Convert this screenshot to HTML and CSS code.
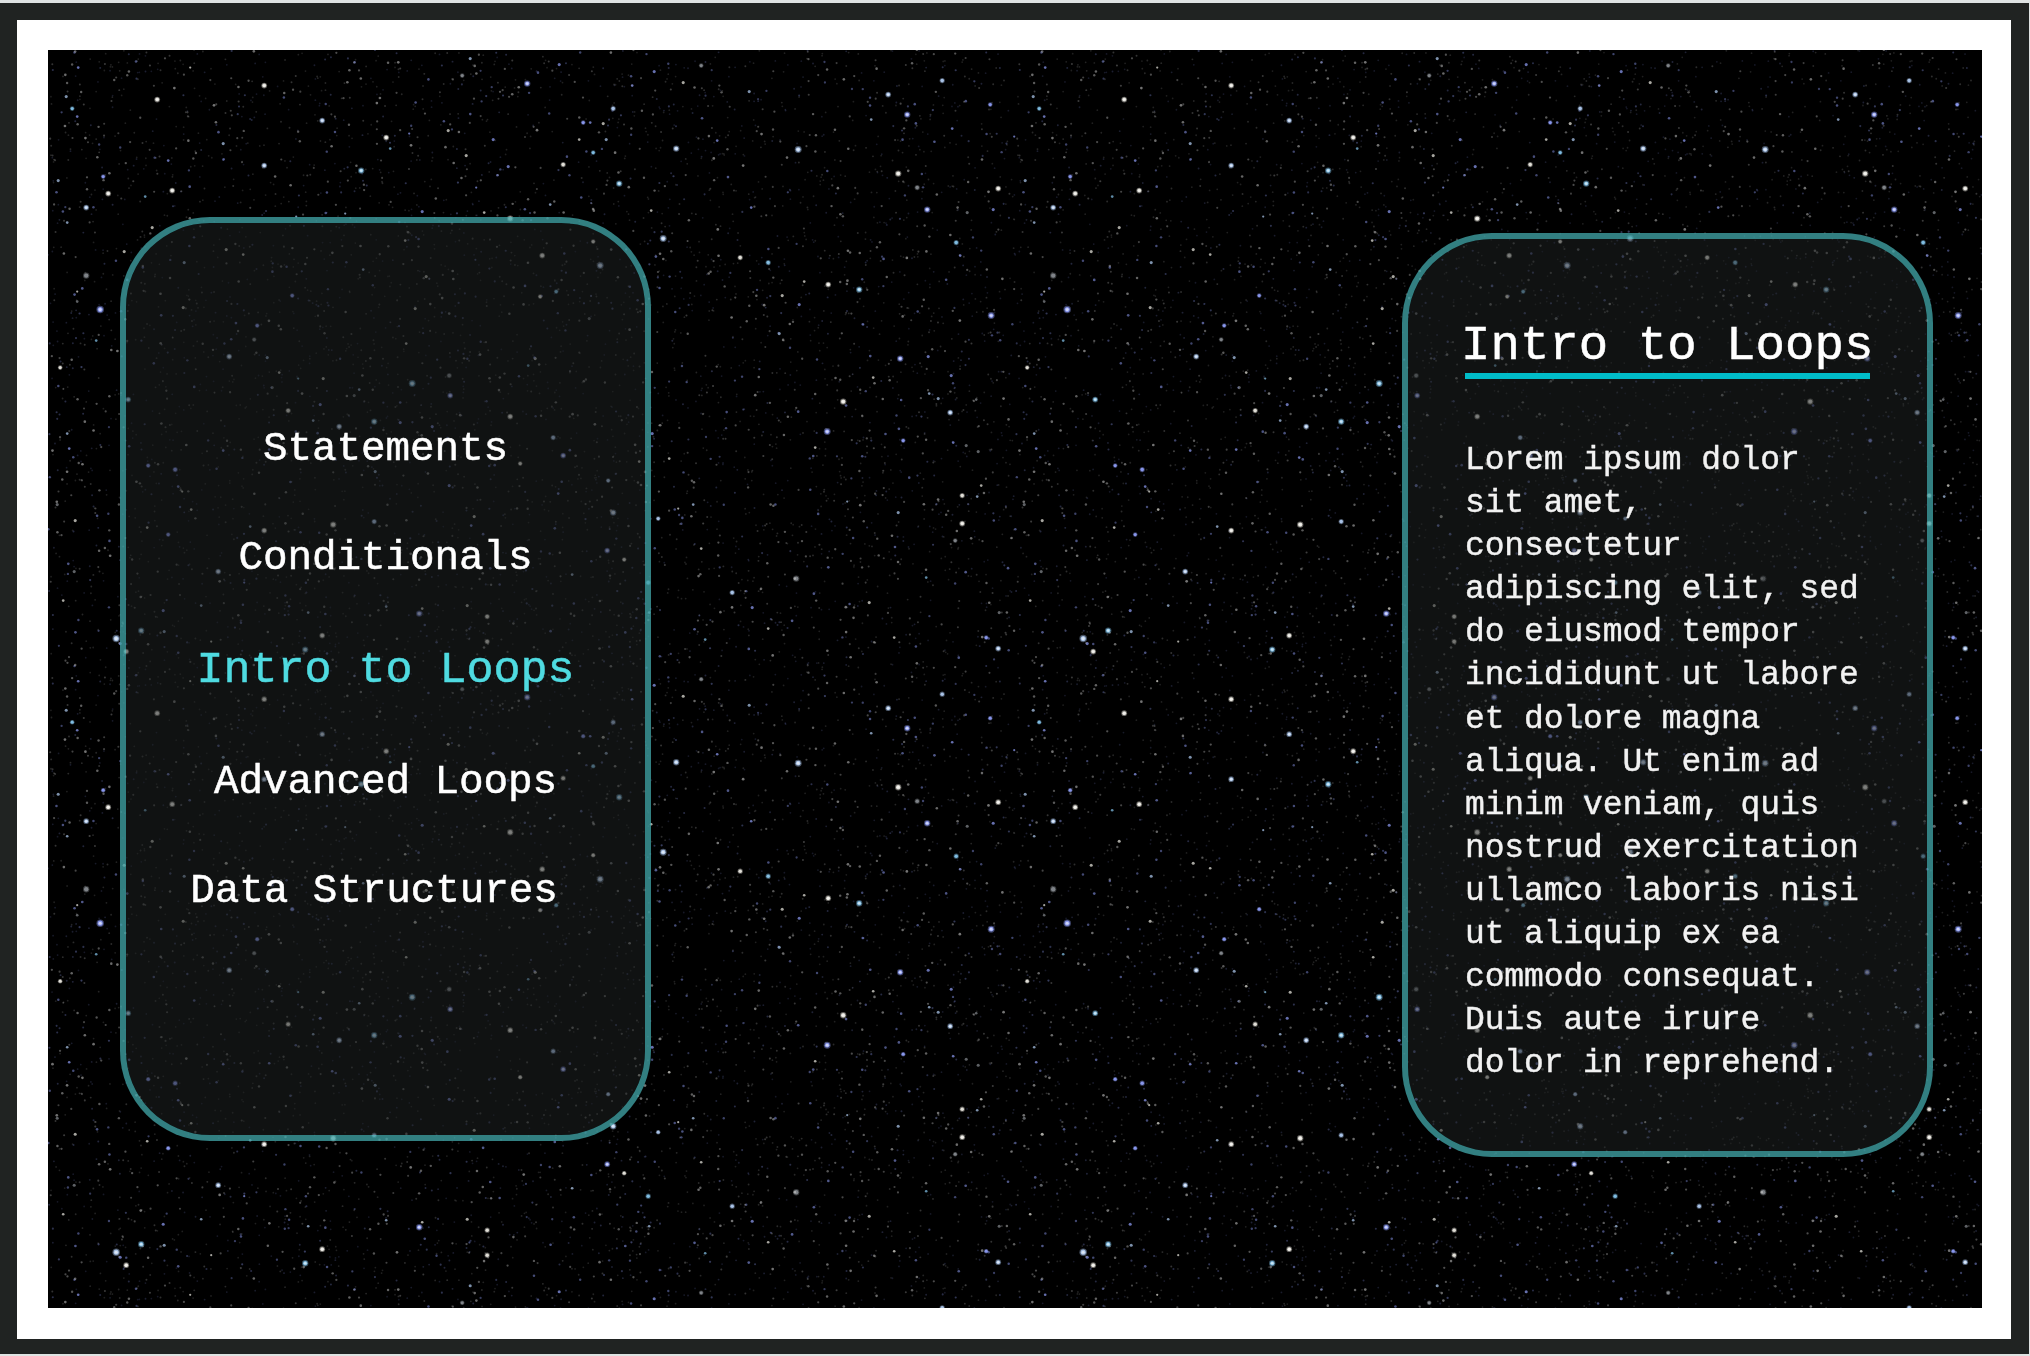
FILE: index.html
```html
<!DOCTYPE html>
<html lang="en">
<head>
<meta charset="utf-8">
<title>Intro to Loops</title>
<link rel="stylesheet" href="styles.css">
</head>
<body>
<div class="frame">
  <div class="mat">
    <main class="scene">
      <canvas class="sky" id="sky" width="1934" height="1258"></canvas>
      <div class="panels">
        <nav class="panel menu">
          <a class="item">Statements</a>
          <a class="item">Conditionals</a>
          <a class="item active">Intro to Loops</a>
          <a class="item">Advanced Loops</a>
          <a class="item wide">Data Structures</a>
        </nav>
        <section class="panel lesson">
          <h1 class="title">Intro to Loops</h1>
          <p class="text">Lorem ipsum dolor<br>sit amet,<br>consectetur<br>adipiscing elit, sed<br>do eiusmod tempor<br>incididunt ut labore<br>et dolore magna<br>aliqua. Ut enim ad<br>minim veniam, quis<br>nostrud exercitation<br>ullamco laboris nisi<br>ut aliquip ex ea<br>commodo consequat.<br>Duis aute irure<br>dolor in reprehend.</p>
        </section>
      </div>
    </main>
  </div>
</div>
<script src="stars.js"></script>
</body>
</html>
```
FILE: styles.css
```css
* {
  box-sizing: border-box;
}

body {
  margin: 0;
  height: 1356px;
  padding: 3px 1px 2px 0;
  background: #dfe3e3;
  overflow: hidden;
  font-family: "Liberation Mono", monospace;
  color: #fff;
}

.frame {
  height: 1351px;
  padding: 17px 18px 15px 17px;
  background: #202322;
}

.mat {
  height: 1319px;
  padding: 30px 29px 31px 31px;
  background: #fff;
}

.scene {
  display: grid;
  width: 1934px;
  height: 1258px;
  background: #000;
  overflow: hidden;
}

.sky,
.panels {
  grid-area: 1 / 1;
}

.sky {
  display: block;
}

.panels {
  z-index: 1;
  display: flex;
  justify-content: space-between;
  align-items: flex-start;
  padding: 167px 49px 0 72px;
}

.panel {
  width: 531px;
  height: 924px;
  border: 6px solid rgba(64, 163, 165, 0.78);
  border-radius: 90px;
  background: rgba(30, 33, 32, 0.55);
  background-clip: padding-box;
}

.menu {
  display: flex;
  flex-direction: column;
  align-items: center;
  padding-top: 172px;
  font-size: 41px;
  letter-spacing: -0.1px;
}

.item {
  height: 109px;
  line-height: 109px;
  white-space: pre;
  -webkit-text-stroke: 0.5px currentColor;
}

.active {
  height: 115px;
  line-height: 115px;
  font-size: 45px;
  letter-spacing: 0;
  color: #4fdbe1;
}

.wide {
  padding-right: 23px;
}

.lesson {
  margin-top: 16px;
  padding: 80px 0 0 57px;
}

.title {
  width: 405px;
  height: 60px;
  margin: 0;
  border-bottom: 6px solid #00bcc8;
  font-size: 49px;
  font-weight: 400;
  line-height: 55px;
  letter-spacing: 0.05px;
  text-indent: -4px;
  white-space: nowrap;
  -webkit-text-stroke: 0.5px currentColor;
}

.text {
  margin: 60px 0 0;
  font-size: 33px;
  line-height: 43.1px;
  letter-spacing: -0.12px;
  white-space: nowrap;
  color: #f2f2f2;
  -webkit-text-stroke: 0.4px currentColor;
}
```
FILE: stars.js
```js
// The sky is one tile of stars repeated across the scene.
const TILE_W = 967;
const TILE_H = 613.6;

const COLORS = {
  w: "238,236,228",
  g: "135,140,145",
  b: "178,206,245",
  v: "145,160,250",
  c: "135,200,240"
};

// Each entry: x, y, size (tenths), colour key.
const STARS = `
30,18,6,v 18,47,7,b 24,59,8,c 29,67,6,v 109,50,10,w 142,18,5,w 216,36,10,w 274,71,10,b 338,88,10,w 342,99,6,c
313,121,11,c 216,116,10,b 175,94,7,b 124,141,10,w 60,144,10,w 55,127,8,v 38,158,10,b 120,111,6,v 10,131,7,b
19,173,6,b 97,147,6,c 104,178,7,w 76,202,7,w 178,200,7,w 195,205,6,w 136,213,7,b 38,226,11,g 29,242,5,w
29,252,6,g 52,260,13,v 135,258,7,w 244,246,8,v 315,220,6,b 248,167,5,b 297,164,5,b 209,276,8,v 206,290,8,g
181,307,10,b 219,308,7,b 12,318,8,w 48,291,6,c 80,350,10,c 231,323,6,w 250,329,5,c 275,329,7,w 224,338,7,g
272,355,7,v 240,361,9,w 291,377,10,b 265,371,6,b 326,372,11,c 311,340,6,b 306,346,7,g 19,384,6,b 21,399,6,v
175,401,6,v 221,400,6,v 100,416,8,v 127,420,9,v 130,437,6,v 134,442,5,w 143,460,6,w 284,408,6,v 327,422,7,b
27,471,7,w 9,455,7,g 99,478,6,w 120,485,8,v 216,481,10,w 202,477,6,b 285,475,11,w 326,472,9,b 170,522,10,b
196,533,5,v 153,556,6,b 115,561,7,v 93,581,11,c 68,589,13,b 72,594,7,v 116,582,7,b 274,586,10,w 257,600,11,c
260,563,6,b 15,551,6,w 338,557,6,b 26,522,7,g 163,592,5,w 78,602,10,w
653,16,8,g 701,42,7,b 840,45,10,b 894,31,9,b 859,65,11,v 942,55,8,v 823,70,6,b 628,99,11,b 750,100,12,b
669,91,6,v 904,79,6,v 966,87,5,v 850,124,11,w 869,138,9,g 879,160,11,v 950,139,10,w 945,160,7,v 703,158,6,v
615,189,12,b 919,163,7,g 908,193,9,c 912,206,6,v 692,208,9,w 720,213,9,c 780,235,10,w 811,240,11,c 734,246,7,w
751,255,7,v 756,232,6,w 943,266,12,v 731,284,7,b 852,309,11,v 880,307,7,v 903,326,7,v 881,344,6,b 890,349,7,b
902,363,10,b 795,352,11,w 779,382,12,v 855,391,8,v 825,328,6,w 905,393,6,v 918,396,7,g 930,402,7,g 928,350,6,g
767,398,6,w 914,446,9,w 933,436,6,w 929,447,6,b 914,474,10,w 907,491,8,g 850,463,7,b 799,452,5,b 653,499,6,w
748,529,11,g 684,543,9,b 704,558,7,v 821,553,7,w 720,579,6,w 657,590,6,c 846,588,6,w 938,588,8,v 950,599,10,b
951,563,7,g 878,528,6,c 630,459,5,w
414,26,8,g 422,9,7,b 479,34,11,v 511,15,7,v 606,22,7,v 584,36,6,v 635,33,7,w 565,59,9,b 535,73,8,v 555,74,7,w
542,73,6,v 361,84,5,v 400,81,7,w 445,90,7,v 418,106,7,w 460,117,7,v 515,115,9,w 545,103,8,c 558,90,7,b
571,134,11,c 531,90,6,w 374,162,7,v 428,138,5,v 436,163,6,w 462,169,11,w 502,155,6,b 603,161,6,w 545,192,8,w
494,206,10,w 552,216,12,b 563,200,6,g 508,242,8,c 492,247,8,w 378,227,7,w 367,259,7,w 358,294,6,w 357,191,6,w
401,264,6,g 364,334,12,c 352,373,7,v 384,377,7,v 401,326,9,g 402,346,10,v 462,367,10,w 505,388,9,b 604,384,7,v
401,436,7,v 560,431,8,b 426,467,7,w 423,476,6,v 565,463,11,b 510,444,6,v 576,510,8,w 371,564,11,v 374,559,6,w
439,567,9,w 419,556,7,w 439,592,9,w 524,525,6,b 601,563,6,b 515,406,10,v 472,414,8,w 559,501,10,v 591,412,6,w
480,316,6,c 487,309,7,w 621,409,6,w 645,455,6,b 610,469,8,b 600,533,9,c 541,269,7,g
`.trim().split(/\s+/).map(function (entry) {
  const p = entry.split(",");
  return { x: +p[0], y: +p[1], size: p[2] / 10, color: COLORS[p[3]], alpha: 1, faint: p[3] === "g" };
});

// Fixed seed, so the dust is the same on every load.
let seed = 20417;
function random() {
  seed = (seed * 1664525 + 1013904223) % 4294967296;
  return seed / 4294967296;
}

for (let i = 0; i < 5200; i++) {
  const level = Math.pow(random(), 4);
  STARS.push({
    x: random() * TILE_W,
    y: random() * TILE_H,
    size: 0.4 + level * 0.22,
    color: random() < 0.35 ? COLORS.v : "205,205,205",
    alpha: 0.22 + level * 0.6
  });
}

const ctx = document.getElementById("sky").getContext("2d");

function dot(x, y, radius, color, alpha) {
  ctx.fillStyle = "rgba(" + color + "," + alpha + ")";
  ctx.beginPath();
  ctx.arc(x, y, radius, 0, Math.PI * 2);
  ctx.fill();
}

for (let oy = 0; oy < 1258; oy += TILE_H) {
  for (let ox = 0; ox < 1934; ox += TILE_W) {
    for (const s of STARS) {
      const x = ox + s.x + 0.2;
      const y = oy + s.y - 0.4;
      if (s.size >= 0.8) {
        dot(x, y, s.size * 2.9, s.color, 0.4);
        dot(x, y, s.size * 2, s.color, 0.9);
        if (s.size >= 1 && !s.faint) {
          dot(x, y, s.size * 1.2, "255,255,255", 0.6);
        }
      } else {
        dot(x, y, s.size * 2.2, s.color, s.alpha * 0.7);
      }
    }
  }
}
```
